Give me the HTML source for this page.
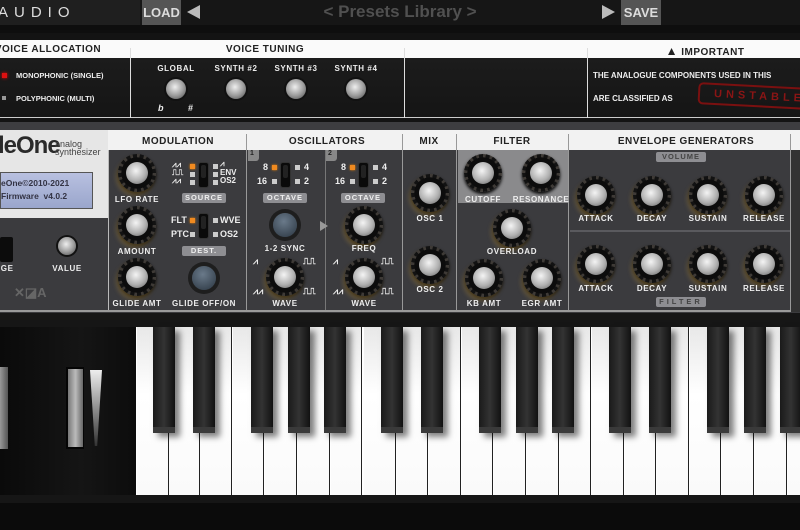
<!DOCTYPE html><html><head><meta charset="utf-8"><style>
*{margin:0;padding:0;box-sizing:border-box}
body{width:800px;height:530px;overflow:hidden;background:#0e0e0e;font-family:"Liberation Sans",sans-serif;position:relative}
.a{position:absolute}
.l{position:absolute;transform:translateX(-50%);color:#eee;font-weight:bold;font-size:8px;letter-spacing:.6px;white-space:nowrap}
.h{position:absolute;color:#222;font-weight:bold;font-size:10px;letter-spacing:.5px;transform:translateX(-50%);white-space:nowrap}
.k{position:absolute;width:38px;height:38px;margin:-19px 0 0 -19px;border-radius:50%;background:radial-gradient(circle,#0c0c0c 0 58%,transparent 59%),repeating-conic-gradient(#3e3a36 0 9deg,#121212 9deg 22.5deg);box-shadow:0 2px 3px #000}
.k::after{content:"";position:absolute;left:8px;top:8px;width:22px;height:22px;border-radius:50%;background:radial-gradient(circle at 45% 40%,#f4f4f4,#b0b0b0 55%,#5a5a5a)}
.g{box-shadow:-2px 4px 4px rgba(170,135,60,.4),0 2px 3px #000}
.s{position:absolute;width:11px;height:11px;border-radius:50%;margin:-5px;background:radial-gradient(circle at 45% 40%,#eee,#999 55%,#444);box-shadow:0 0 0 2px #111}
.b{position:absolute;background:#8e8e92;color:#eee;font-size:7.5px;font-weight:bold;letter-spacing:1px;text-align:center;border-radius:2px;line-height:10px}
.sw{position:absolute;width:11px;height:26px;background:#0a0a0a;border-radius:3px;border:1px solid #333}
.sw::after{content:"";position:absolute;left:2px;top:2px;width:5px;height:13px;background:#222;border-radius:2px}
.sq{position:absolute;width:5px;height:5px;background:#ccc}
.or{background:#f08a20;box-shadow:0 0 2px #f80}
.t{position:absolute;color:#eee;font-weight:bold;font-size:9px}
.btn{position:absolute;width:24px;height:24px;border-radius:50%;background:radial-gradient(circle at 45% 35%,#6a7a8a,#2a3540);box-shadow:0 0 0 4px #1e1e1e}
.wk{position:absolute;top:327px;height:168px;width:31.6px;background:linear-gradient(#e8e8e8,#fff 40%,#fafafa);border-right:1.2px solid #222}
.bk{position:absolute;top:327px;height:106px;width:22px;background:linear-gradient(90deg,#1a1a1a,#333 50%,#111);border-bottom:6px solid #3a3a3a;box-shadow:5px 4px 6px rgba(0,0,0,.5)}
</style></head><body>
<!-- top bar -->
<div class="a" style="left:0;top:0;width:800px;height:25px;background:#161616"></div>
<div class="a" style="left:0;top:0;width:140px;height:25px;background:#1f1f1f"></div>
<div class="a" style="left:-2px;top:4px;color:#ddd;font-size:15px;letter-spacing:6px">AUDIO</div>
<div class="a" style="left:142px;top:0;width:39px;height:25px;background:#555;color:#ddd;font-weight:bold;font-size:13px;line-height:25px;text-align:center">LOAD</div>
<div class="a" style="left:187px;top:5px;width:0;height:0;border-top:7px solid transparent;border-bottom:7px solid transparent;border-right:13px solid #bbb"></div>
<div class="a" style="left:0;top:2px;width:800px;text-align:center;color:#505050;font-weight:bold;font-size:17px">&lt; Presets Library &gt;</div>
<div class="a" style="left:602px;top:5px;width:0;height:0;border-top:7px solid transparent;border-bottom:7px solid transparent;border-left:13px solid #bbb"></div>
<div class="a" style="left:621px;top:0;width:40px;height:25px;background:#555;color:#ddd;font-weight:bold;font-size:13px;line-height:25px;text-align:center">SAVE</div>
<!-- top panel -->
<div class="a" style="left:0;top:33px;width:800px;height:92px;background:#131313"></div>
<div class="a" style="left:0;top:40px;width:800px;height:18px;background:#fafafa"></div>
<div class="a" style="left:0;top:58px;width:800px;height:60px;background:linear-gradient(#1c1c1c,#151515);border-bottom:1px solid #ccc"></div>
<div class="a" style="left:130px;top:48px;width:1px;height:70px;background:#ddd"></div>
<div class="a" style="left:404px;top:48px;width:1px;height:70px;background:#ddd"></div>
<div class="a" style="left:587px;top:48px;width:1px;height:70px;background:#ddd"></div>
<div class="h" style="left:48px;top:44px">VOICE ALLOCATION</div>
<div class="h" style="left:265px;top:44px">VOICE TUNING</div>
<div class="h" style="left:705px;top:44px"><span style="font-size:12px">▲</span> IMPORTANT</div>
<div class="a" style="left:2px;top:73px;width:5px;height:5px;background:#e01010;box-shadow:0 0 3px #f00"></div>
<div class="t" style="left:16px;top:71px;font-size:7.5px">MONOPHONIC (SINGLE)</div>
<div class="sq" style="left:2px;top:96px;width:4px;height:4px;background:#999"></div>
<div class="t" style="left:16px;top:94px;font-size:7.5px">POLYPHONIC (MULTI)</div>
<div class="l" style="left:176px;top:64px">GLOBAL</div><div class="l" style="left:236px;top:64px">SYNTH #2</div><div class="l" style="left:296px;top:64px">SYNTH #3</div><div class="l" style="left:356px;top:64px">SYNTH #4</div>
<div class="s" style="left:176px;top:89px;width:20px;height:20px;margin:-10px"></div><div class="s" style="left:236px;top:89px;width:20px;height:20px;margin:-10px"></div><div class="s" style="left:296px;top:89px;width:20px;height:20px;margin:-10px"></div><div class="s" style="left:356px;top:89px;width:20px;height:20px;margin:-10px"></div>
<div class="t" style="left:158px;top:103px;font-style:italic">b</div><div class="t" style="left:188px;top:103px">#</div>
<div class="t" style="left:593px;top:71px;font-size:8px">THE ANALOGUE COMPONENTS USED IN THIS</div>
<div class="t" style="left:593px;top:94px;font-size:8px">ARE CLASSIFIED AS</div>
<div class="a" style="left:698px;top:85px;width:110px;height:22px;border:2px solid #7a1010;border-radius:5px;transform:rotate(3deg);color:#8a1515;font-weight:bold;font-size:11px;letter-spacing:4px;padding:3px 0 0 14px">UNSTABLE</div>
<!-- main panel -->
<div class="a" style="left:0;top:122px;width:800px;height:8px;background:#3d3d40"></div>
<div class="a" style="left:0;top:130px;width:800px;height:183px;background:#3b3b3e"></div>
<div class="a" style="left:0;top:130px;width:800px;height:20px;background:#f2f2f2"></div>
<div class="a" style="left:0;top:130px;width:108px;height:88px;background:#e6e6e6"></div>
<div class="a" style="left:108px;top:150px;width:1px;height:162px;background:#bbb"></div>
<div class="a" style="left:246px;top:134px;width:1px;height:178px;background:#999"></div>
<div class="a" style="left:325px;top:150px;width:1px;height:162px;background:#777"></div>
<div class="a" style="left:402px;top:134px;width:1px;height:178px;background:#999"></div>
<div class="a" style="left:456px;top:134px;width:1px;height:178px;background:#999"></div>
<div class="a" style="left:568px;top:134px;width:1px;height:178px;background:#999"></div>
<div class="a" style="left:790px;top:134px;width:1px;height:178px;background:#999"></div>
<div class="a" style="left:0;top:310px;width:800px;height:2px;background:#9a9a9a"></div>
<div class="h" style="left:178px;top:136px">MODULATION</div><div class="h" style="left:327px;top:136px">OSCILLATORS</div><div class="h" style="left:429px;top:136px">MIX</div><div class="h" style="left:512px;top:136px">FILTER</div><div class="h" style="left:686px;top:136px">ENVELOPE GENERATORS</div>
<!-- logo -->
<div class="a" style="left:-2px;top:132px;font-size:24px;font-weight:bold;color:#2a2a2a;letter-spacing:-1px">leOne</div>
<div class="a" style="left:55px;top:140px;font-size:9px;color:#444;line-height:8px">analog<br>synthesizer</div>
<div class="a" style="left:0;top:172px;width:93px;height:37px;background:linear-gradient(#b8c0e0,#9aa6cc);border:1px solid #555;color:#334;font-weight:bold;font-size:8.5px;line-height:13px;padding:4px 0 0 0">eOne©2010-2021<br>Firmware &nbsp;v4.0.2</div>
<div class="a" style="left:0;top:237px;width:13px;height:25px;background:#0c0c0c;border-radius:2px"></div>
<div class="l" style="left:4px;top:264px">AGE</div>
<div class="s" style="left:67px;top:246px;width:18px;height:18px;margin:-9px"></div>
<div class="l" style="left:67px;top:264px">VALUE</div>
<div class="a" style="left:14px;top:285px;color:#666;font-weight:bold;font-size:13px">✕◪A</div>
<!-- modulation -->
<div class="k g" style="left:137px;top:173px"></div><div class="l" style="left:137px;top:195px">LFO RATE</div>
<div class="k g" style="left:137px;top:225px"></div><div class="l" style="left:137px;top:247px">AMOUNT</div>
<div class="k g" style="left:137px;top:277px"></div><div class="l" style="left:137px;top:299px">GLIDE AMT</div>
<div class="sw" style="left:198px;top:162px"></div>
<div class="t" style="left:172px;top:161px;font-size:8px;line-height:8px">⩘⩘<br>⎍⎍<br>⩘⩘</div>
<div class="sq or" style="left:190px;top:164px"></div><div class="sq" style="left:190px;top:172px"></div><div class="sq" style="left:190px;top:180px"></div>
<div class="sq" style="left:213px;top:164px"></div><div class="sq" style="left:213px;top:172px"></div><div class="sq" style="left:213px;top:180px"></div>
<div class="t" style="left:220px;top:160px;font-size:8px;line-height:8.5px">⩘<br>ENV<br>OS2</div>
<div class="b" style="left:182px;top:193px;width:44px">SOURCE</div>
<div class="sw" style="left:198px;top:213px"></div>
<div class="t" style="left:171px;top:215px">FLT</div><div class="sq or" style="left:190px;top:218px"></div>
<div class="t" style="left:171px;top:229px">PTC</div><div class="sq" style="left:190px;top:232px"></div>
<div class="sq" style="left:213px;top:218px"></div><div class="t" style="left:220px;top:215px">WVE</div>
<div class="sq" style="left:213px;top:232px"></div><div class="t" style="left:220px;top:229px">OS2</div>
<div class="b" style="left:182px;top:246px;width:44px">DEST.</div>
<div class="btn" style="left:192px;top:266px"></div>
<div class="l" style="left:204px;top:299px">GLIDE OFF/ON</div>
<!-- osc1 -->
<div class="a" style="left:248px;top:150px;width:11px;height:11px;background:#888;border-radius:0 0 3px 0;color:#222;font-size:7px;font-weight:bold;padding-left:2px">1</div>
<div class="sw" style="left:280px;top:162px"></div>
<div class="t" style="left:263px;top:162px">8</div><div class="sq or" style="left:272px;top:165px"></div>
<div class="t" style="left:257px;top:176px">16</div><div class="sq" style="left:272px;top:179px"></div>
<div class="sq" style="left:295px;top:165px"></div><div class="t" style="left:304px;top:162px">4</div>
<div class="sq" style="left:295px;top:179px"></div><div class="t" style="left:304px;top:176px">2</div>
<div class="b" style="left:263px;top:193px;width:44px">OCTAVE</div>
<div class="btn" style="left:273px;top:213px"></div>
<div class="l" style="left:285px;top:244px">1-2 SYNC</div>
<div class="a" style="left:320px;top:221px;border-top:5px solid transparent;border-bottom:5px solid transparent;border-left:8px solid #999"></div>
<div class="k g" style="left:285px;top:277px"></div><div class="l" style="left:285px;top:299px">WAVE</div>
<div class="t" style="left:253px;top:256px">⩘</div><div class="t" style="left:303px;top:256px">⎍⎍</div><div class="t" style="left:253px;top:286px">⩘⩘</div><div class="t" style="left:303px;top:286px">⎍⎍</div>
<!-- osc2 -->
<div class="a" style="left:326px;top:150px;width:11px;height:11px;background:#888;border-radius:0 0 3px 0;color:#222;font-size:7px;font-weight:bold;padding-left:2px">2</div>
<div class="sw" style="left:358px;top:162px"></div>
<div class="t" style="left:341px;top:162px">8</div><div class="sq or" style="left:350px;top:165px"></div>
<div class="t" style="left:335px;top:176px">16</div><div class="sq" style="left:350px;top:179px"></div>
<div class="sq" style="left:373px;top:165px"></div><div class="t" style="left:382px;top:162px">4</div>
<div class="sq" style="left:373px;top:179px"></div><div class="t" style="left:382px;top:176px">2</div>
<div class="b" style="left:341px;top:193px;width:44px">OCTAVE</div>
<div class="k g" style="left:364px;top:225px"></div><div class="l" style="left:364px;top:244px">FREQ</div>
<div class="k g" style="left:364px;top:277px"></div><div class="l" style="left:364px;top:299px">WAVE</div>
<div class="t" style="left:333px;top:256px">⩘</div><div class="t" style="left:381px;top:256px">⎍⎍</div><div class="t" style="left:333px;top:286px">⩘⩘</div><div class="t" style="left:381px;top:286px">⎍⎍</div>
<!-- mix -->
<div class="k g" style="left:430px;top:193px"></div><div class="l" style="left:430px;top:214px">OSC 1</div>
<div class="k g" style="left:430px;top:265px"></div><div class="l" style="left:430px;top:285px">OSC 2</div>
<!-- filter -->
<div class="a" style="left:458px;top:150px;width:110px;height:53px;background:#8a8a8c"></div>
<div class="k" style="left:483px;top:173px"></div><div class="l" style="left:483px;top:195px">CUTOFF</div>
<div class="k" style="left:541px;top:173px"></div><div class="l" style="left:541px;top:195px">RESONANCE</div>
<div class="k g" style="left:512px;top:228px"></div><div class="l" style="left:512px;top:247px">OVERLOAD</div>
<div class="k g" style="left:484px;top:278px"></div><div class="l" style="left:484px;top:299px">KB AMT</div>
<div class="k g" style="left:542px;top:278px"></div><div class="l" style="left:542px;top:299px">EGR AMT</div>
<!-- env -->
<div class="b" style="left:656px;top:152px;width:50px;color:#444">VOLUME</div>
<div class="a" style="left:570px;top:230px;width:220px;height:2px;background:#5a5a5e"></div>
<div class="k g" style="left:596px;top:195px"></div><div class="k g" style="left:652px;top:195px"></div><div class="k g" style="left:708px;top:195px"></div><div class="k g" style="left:764px;top:195px"></div>
<div class="l" style="left:596px;top:214px">ATTACK</div><div class="l" style="left:652px;top:214px">DECAY</div><div class="l" style="left:708px;top:214px">SUSTAIN</div><div class="l" style="left:764px;top:214px">RELEASE</div>
<div class="k g" style="left:596px;top:264px"></div><div class="k g" style="left:652px;top:264px"></div><div class="k g" style="left:708px;top:264px"></div><div class="k g" style="left:764px;top:264px"></div>
<div class="l" style="left:596px;top:284px">ATTACK</div><div class="l" style="left:652px;top:284px">DECAY</div><div class="l" style="left:708px;top:284px">SUSTAIN</div><div class="l" style="left:764px;top:284px">RELEASE</div>
<div class="b" style="left:656px;top:297px;width:50px;color:#444;letter-spacing:3px">FILTER</div>
<div class="a" style="left:791px;top:150px;width:9px;height:162px;background:#333"></div>
<!-- keyboard area -->
<div class="a" style="left:0;top:313px;width:800px;height:14px;background:#161616"></div>
<div class="a" style="left:0;top:327px;width:136px;height:170px;background:linear-gradient(90deg,#0a0a0a,#151515 60%,#0c0c0c)"></div>
<div class="a" style="left:0;top:367px;width:8px;height:82px;background:linear-gradient(90deg,#999,#555)"></div>
<div class="a" style="left:66px;top:367px;width:18px;height:82px;background:#050505"></div>
<div class="a" style="left:68px;top:369px;width:15px;height:78px;background:linear-gradient(90deg,#777,#bbb 50%,#666)"></div>
<div class="a" style="left:90px;top:370px;width:12px;height:76px;background:linear-gradient(#eee,#333);clip-path:polygon(0 0,100% 0,60% 100%,40% 100%)"></div>
<div class="a" style="left:136px;top:327px;width:664px;height:168px;background:#fff"></div>
<div class="wk" style="left:137px"></div><div class="wk" style="left:168.6px"></div><div class="wk" style="left:200.2px"></div><div class="wk" style="left:232.8px"></div><div class="wk" style="left:265.4px"></div><div class="wk" style="left:298px"></div><div class="wk" style="left:330.6px"></div>
<div class="wk" style="left:364px"></div><div class="wk" style="left:396.6px"></div><div class="wk" style="left:429.2px"></div><div class="wk" style="left:461.8px"></div><div class="wk" style="left:494.4px"></div><div class="wk" style="left:527px"></div><div class="wk" style="left:559.6px"></div>
<div class="wk" style="left:592px"></div><div class="wk" style="left:624.6px"></div><div class="wk" style="left:657.2px"></div><div class="wk" style="left:689.8px"></div><div class="wk" style="left:722.4px"></div><div class="wk" style="left:755px"></div><div class="wk" style="left:787.6px"></div>
<div class="bk" style="left:153px"></div><div class="bk" style="left:193px"></div><div class="bk" style="left:251px"></div><div class="bk" style="left:288px"></div><div class="bk" style="left:324px"></div>
<div class="bk" style="left:381px"></div><div class="bk" style="left:421px"></div><div class="bk" style="left:479px"></div><div class="bk" style="left:516px"></div><div class="bk" style="left:552px"></div>
<div class="bk" style="left:609px"></div><div class="bk" style="left:649px"></div><div class="bk" style="left:707px"></div><div class="bk" style="left:744px"></div><div class="bk" style="left:780px"></div>
<div class="a" style="left:0;top:495px;width:800px;height:35px;background:#0b0b0b;border-top:8px solid #161616"></div>
</body></html>
